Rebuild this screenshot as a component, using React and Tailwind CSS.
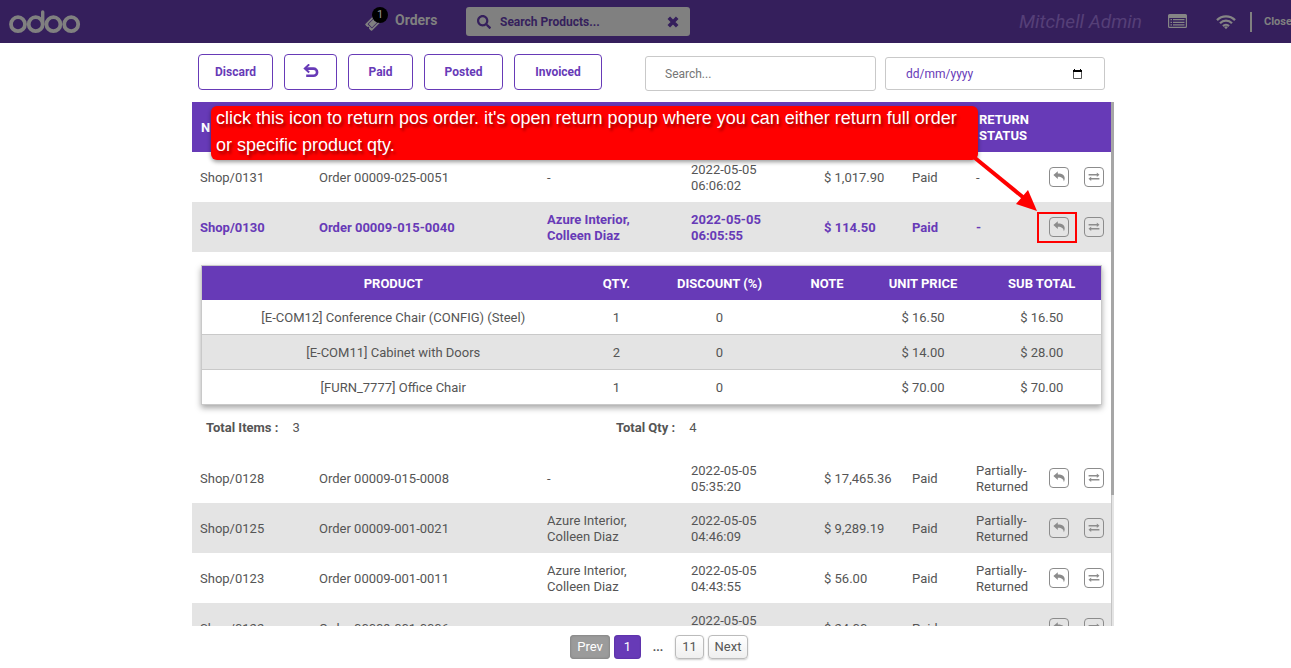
import React from "react";
import { FaTicketAlt, FaSearch } from "react-icons/fa";

const orders = [
  { name: "Shop/0131", ref: "Order 00009-025-0051", customer: "-", date: "2022-05-05 06:06:02", total: "$ 1,017.90", status: "Paid", ret: "-" },
  { name: "Shop/0130", ref: "Order 00009-015-0040", customer: "Azure Interior, Colleen Diaz", date: "2022-05-05 06:05:55", total: "$ 114.50", status: "Paid", ret: "-", open: true },
  { name: "Shop/0128", ref: "Order 00009-015-0008", customer: "-", date: "2022-05-05 05:35:20", total: "$ 17,465.36", status: "Paid", ret: "Partially-Returned" },
  { name: "Shop/0125", ref: "Order 00009-001-0021", customer: "Azure Interior, Colleen Diaz", date: "2022-05-05 04:46:09", total: "$ 9,289.19", status: "Paid", ret: "Partially-Returned" },
  { name: "Shop/0123", ref: "Order 00009-001-0011", customer: "Azure Interior, Colleen Diaz", date: "2022-05-05 04:43:55", total: "$ 56.00", status: "Paid", ret: "Partially-Returned" },
  { name: "Shop/0122", ref: "Order 00009-001-0006", customer: "", date: "2022-05-05 04:38:26", total: "$ 24.00", status: "Paid", ret: "" },
];

const lines = [
  ["[E-COM12] Conference Chair (CONFIG) (Steel)", "1", "0", "", "$ 16.50", "$ 16.50"],
  ["[E-COM11] Cabinet with Doors", "2", "0", "", "$ 14.00", "$ 28.00"],
  ["[FURN_7777] Office Chair", "1", "0", "", "$ 70.00", "$ 70.00"],
];

function OdooLogo() {
  return (
    <svg viewBox="0 0 72 24" className="h-6 w-[72px]" fill="none" stroke="#808080" strokeWidth="3.8" role="img" aria-label="odoo">
      <circle cx="9" cy="14.2" r="7" />
      <circle cx="26.7" cy="14.2" r="7" />
      <circle cx="44.4" cy="14.2" r="7" />
      <circle cx="62.2" cy="14.2" r="7" />
      <path d="M33.7 14.5V1.900" strokeWidth="3.4" strokeLinecap="round" />
    </svg>
  );
}

function ListIcon() {
  return (
    <svg viewBox="0 0 19 15" className="h-[15px] w-[19px]" fill="#858585" aria-hidden="true">
      <path fillRule="evenodd" d="M1.5 0h16A1.5 1.5 0 0 1 19 1.5v11a1.5 1.5 0 0 1-1.500 1.500h-16A1.500 1.500 0 0 1 0 12.500v-11A1.500 1.500 0 0 1 1.500 0ZM1.200 4v8.300q0 .5.5.5h15.600q.5 0 .5-.5V4Z" />
      <path d="M2.500 5h1.500v1.300H2.500zM5 5h11.500v1.300H5zM2.500 7.700h1.500V9H2.500zM5 7.700h11.500V9H5zM2.500 10.300h1.500v1.300H2.500zM5 10.300h11.500v1.300H5z" />
    </svg>
  );
}

function WifiIcon() {
  return (
    <svg viewBox="0 0 20 16" className="ml-[29px] h-4 w-5" fill="none" stroke="#858585" strokeWidth="2.300" aria-hidden="true">
      <path d="M1 6.100a12.700 12.700 0 0 1 18 0" />
      <path d="M4 9.200a8.500 8.500 0 0 1 12 0" />
      <path d="M7 12.100a4.300 4.300 0 0 1 6 0" />
      <path d="M8.100 13.100a2.700 2.700 0 0 1 3.800 0L10 15.200Z" fill="#858585" stroke="none" />
    </svg>
  );
}

function ClearIcon() {
  return (
    <svg viewBox="0 0 12 12" className="size-3" stroke="#351f5c" strokeWidth="3.600" aria-hidden="true">
      <path d="M1.800 1.800L10.200 10.200M10.200 1.800L1.800 10.200" />
    </svg>
  );
}

function UndoIcon() {
  return (
    <svg viewBox="0 0 16 16" className="size-4" fill="none" stroke="#673ab7" strokeWidth="2.600" aria-hidden="true">
      <path d="M3 4.600H10.500a3.600 3.600 0 0 1 0 7.200H3.200" />
      <path d="M6.200 0.400L1.800 4.600L6.200 8.600" strokeWidth="2" />
    </svg>
  );
}

function ReplyIcon() {
  return (
    <svg viewBox="0 0 12 14" className="h-3.5 w-3" fill="#8c8c8c" aria-hidden="true">
      <path d="M.4 5L4.800 1.200V3.500C9.300 3.400 11.700 5.300 11.700 8.300C11.700 9.500 11.300 10.500 10.800 11.300C10.600 8.300 8.800 6.900 4.800 6.800V8.900Z" />
    </svg>
  );
}

function ExchangeIcon() {
  return (
    <svg viewBox="0 0 12 14" className="h-3.5 w-3" fill="#8c8c8c" aria-hidden="true">
      <path d="M.6 4.100H8.800V2.500L11.500 4.800L8.800 7V5.400H.6Z" />
      <path d="M11.400 8.100H3.200V6.500L.5 8.800L3.200 11V9.400H11.400Z" />
    </svg>
  );
}

function ToolButton({ children, className, label }) {
  return (
    <button type="button" aria-label={label} className={"flex h-9 items-center justify-center rounded border border-[#673ab7] bg-white text-xs font-bold text-[#673ab7] " + className}>
      {children}
    </button>
  );
}

function IconButton({ label, children }) {
  return (
    <button type="button" aria-label={label} className="flex size-5 items-start justify-center rounded border border-[#8c8c8c] pt-0.5">
      {children}
    </button>
  );
}

function Details() {
  return (
    <tr>
      <td colSpan={8} className="px-[9px] pt-[13px] pb-[17px]">
        <table className="w-full table-fixed border-collapse border border-[#c9c9c9] text-center shadow-[0_3px_6px_rgba(0,0,0,0.35)]">
          <colgroup>
            <col className="w-[383px]" />
            <col className="w-16" />
            <col className="w-[142px]" />
            <col className="w-[73px]" />
            <col className="w-[119px]" />
            <col />
          </colgroup>
          <thead>
            <tr className="h-[34px] bg-[#673ab7] text-white">
              {["PRODUCT", "QTY.", "DISCOUNT (%)", "NOTE", "UNIT PRICE", "SUB TOTAL"].map((h) => (
                <th key={h} className="pt-0.5 font-bold whitespace-nowrap">{h}</th>
              ))}
            </tr>
          </thead>
          <tbody>
            {lines.map((line) => (
              <tr key={line[0]} className="h-[35px] border-b border-[#c9c9c9] bg-white even:bg-[#e4e4e4]">
                {line.map((cell, i) => (
                  <td key={i} className="pt-0.5">{cell}</td>
                ))}
              </tr>
            ))}
          </tbody>
        </table>
        <div className="mt-[15px] grid grid-cols-[410px_1fr] px-[5px]">
          <p><b>Total Items :</b><span className="ml-3.5">3</span></p>
          <p><b>Total Qty :</b><span className="ml-3.5">4</span></p>
        </div>
      </td>
    </tr>
  );
}

function OrderRow({ order, shaded }) {
  const tone = (shaded ? "bg-[#e4e4e4] " : "bg-white ") + (order.open ? "font-bold text-[#673ab7]" : "");
  return (
    <tr className={"h-[50px] " + tone}>
      <td className="pt-0.5 pl-2">{order.name}</td>
      <td className="pt-0.5 pl-2">{order.ref}</td>
      <td className="pt-0.5 pr-8 pl-2">{order.customer}</td>
      <td className="pt-0.5 pr-12 pl-2">{order.date}</td>
      <td className="pt-0.5 pl-2 whitespace-nowrap">{order.total}</td>
      <td className="pt-0.5 pl-2">{order.status}</td>
      <td className="pt-0.5 pl-2">{order.ret}</td>
      <td className="pl-[18px]">
        <div className="flex gap-[15px]">
          <IconButton label="Return order"><ReplyIcon /></IconButton>
          <IconButton label="Exchange order"><ExchangeIcon /></IconButton>
        </div>
      </td>
    </tr>
  );
}

function Callout() {
  return (
    <>
      <div className="absolute top-1 left-[19px] w-[767px] rounded-md bg-[#ff0000] px-[5px] font-['Liberation_Sans',sans-serif] text-lg leading-[27px] text-white shadow-[0_2px_4px_rgba(0,0,0,0.4)] [text-shadow:2px_3px_3px_rgba(0,0,0,0.4)]">
        <p className="-mt-px pb-px">
          click this icon to return pos order. it's open return popup where you can either return full order or specific product qty.
        </p>
      </div>
      <svg className="absolute top-[54px] left-[780px] h-[56px] w-[68px]" viewBox="0 0 68 56" aria-hidden="true">
        <path d="M3 2L52 42" stroke="#ff0000" strokeWidth="4" />
        <path d="M65 55L44 48L56 34Z" fill="#ff0000" />
      </svg>
      <div className="absolute top-[110px] left-[845px] h-[31px] w-10 border-2 border-[#ff0000]" />
    </>
  );
}

export default function App() {
  return (
    <div className="flex h-screen flex-col overflow-hidden bg-white font-[Roboto,sans-serif] text-[13px] leading-4 text-[#555555]">
      <header className="flex h-[43px] shrink-0 items-center overflow-hidden bg-[#351f5c] pl-[9px] text-[#808080]">
        <div className="w-[357px] shrink-0"><OdooLogo /></div>
        <button type="button" className="flex w-[100px] shrink-0 items-center pb-1 text-sm font-bold">
          <span className="relative mr-[7px] flex h-5 w-[22px] items-end">
            <FaTicketAlt className="size-3.5 -rotate-45" />
            <span className="absolute -top-[3px] right-0 flex size-4 items-center justify-center rounded-full bg-black text-[11px] font-normal text-[#999999]">1</span>
          </span>
          Orders
        </button>
        <div className="flex h-[29px] w-56 shrink-0 items-center rounded-[3px] bg-[#808080] px-[11px] text-[#351f5c]">
          <FaSearch className="size-3.5 shrink-0" />
          <input aria-label="Search products" placeholder="Search Products..." className="min-w-0 flex-1 bg-transparent pl-[9px] text-xs font-bold outline-none placeholder:text-[#351f5c]" />
          <button type="button" aria-label="Clear search"><ClearIcon /></button>
        </div>
        <div className="ml-auto flex shrink-0 items-center">
          <span className="text-[19px] text-[#553f78] italic">Mitchell Admin</span>
          <button type="button" aria-label="Order list" className="ml-[26px]"><ListIcon /></button>
          <WifiIcon />
          <span className="ml-3.5 h-5 w-0.5 bg-[#808080]" />
          <button type="button" className="ml-3 w-[27px] text-left text-[11px] font-bold">Close</button>
        </div>
      </header>

      <main className="flex min-h-0 flex-1 flex-col pr-[177px] pl-48">
        <div className="flex h-[59px] shrink-0 items-center pr-[9px] pl-1.5">
          <div className="flex gap-[11px] pb-0.5">
            <ToolButton className="w-[75px]">Discard</ToolButton>
            <ToolButton className="w-[53px]" label="Back"><UndoIcon /></ToolButton>
            <ToolButton className="w-[65px]">Paid</ToolButton>
            <ToolButton className="w-[79px]">Posted</ToolButton>
            <ToolButton className="w-[88px]">Invoiced</ToolButton>
          </div>
          <div className="ml-auto flex items-center gap-[9px] pt-0.5">
            <input aria-label="Search orders" placeholder="Search..." className="h-[35px] w-[231px] rounded-[3px] border border-[#c9c9c9] px-[19px] text-xs outline-none placeholder:text-[#757575]" />
            <div className="flex h-[33px] w-[220px] items-center rounded-[3px] border border-[#c9c9c9] pr-[22px] pl-5">
              <input aria-label="Order date" placeholder="dd/mm/yyyy" className="min-w-0 flex-1 text-xs outline-none placeholder:text-[#673ab7]" />
              <svg viewBox="0 0 9 10" className="h-2.5 w-[9px]" aria-hidden="true">
                <path d="M.5 2.500v7h8v-7" fill="none" stroke="#555555" />
                <path d="M0 1h1V0h1v1h5V0h1v1h1v2H0z" fill="#000000" />
              </svg>
            </div>
          </div>
        </div>

        <div className="relative flex min-h-0 flex-1">
          <div className="min-w-0 flex-1 overflow-hidden">
            <table className="w-full table-fixed border-collapse text-left">
              <colgroup>
                <col className="w-[119px]" />
                <col className="w-[228px]" />
                <col className="w-36" />
                <col className="w-[133px]" />
                <col className="w-[88px]" />
                <col className="w-16" />
                <col className="w-[63px]" />
                <col />
              </colgroup>
              <thead>
                <tr className="h-[50px] bg-[#673ab7] text-white">
                  <th className="pt-0.5 pl-[9px]" aria-label="Name">N</th>
                  <th aria-label="Order reference" />
                  <th aria-label="Customer" />
                  <th aria-label="Date" />
                  <th aria-label="Total" />
                  <th aria-label="State" />
                  <th className="pt-0.5 pl-[11px]">RETURN STATUS</th>
                  <th aria-label="Actions" />
                </tr>
              </thead>
              <tbody>
                {orders.map((order, i) => (
                  <React.Fragment key={order.name}>
                    <OrderRow order={order} shaded={i % 2 === 1} />
                    {order.open && <Details />}
                  </React.Fragment>
                ))}
              </tbody>
            </table>
          </div>
          <div className="w-[3px] shrink-0 border-l border-[#c4c4c4] bg-[#e4e4e4]">
            <div className="-ml-px h-3/4 bg-[#a6a6a6]" />
          </div>
          <Callout />
        </div>

        <nav aria-label="Pagination" className="flex h-[42px] shrink-0 items-center justify-center gap-1 pl-3">
          <button type="button" className="h-6 w-10 rounded bg-[#9b9b9b] text-white shadow-[inset_0_0_2px_1px_#888888]">Prev</button>
          <button type="button" className="h-6 w-[27px] rounded bg-[#673ab7] text-white shadow-[inset_0_0_2px_#4a2592]">1</button>
          <span className="w-[26px] text-center text-xs font-bold">...</span>
          <button type="button" className="h-6 w-[29px] rounded border border-[#bbbbbb] bg-linear-to-b from-white to-[#efefef] shadow-[0_1px_2px_rgba(0,0,0,0.2)]">11</button>
          <button type="button" className="h-6 w-10 rounded border border-[#bbbbbb] bg-linear-to-b from-white to-[#efefef] shadow-[0_1px_2px_rgba(0,0,0,0.2)]">Next</button>
        </nav>
      </main>
    </div>
  );
}
